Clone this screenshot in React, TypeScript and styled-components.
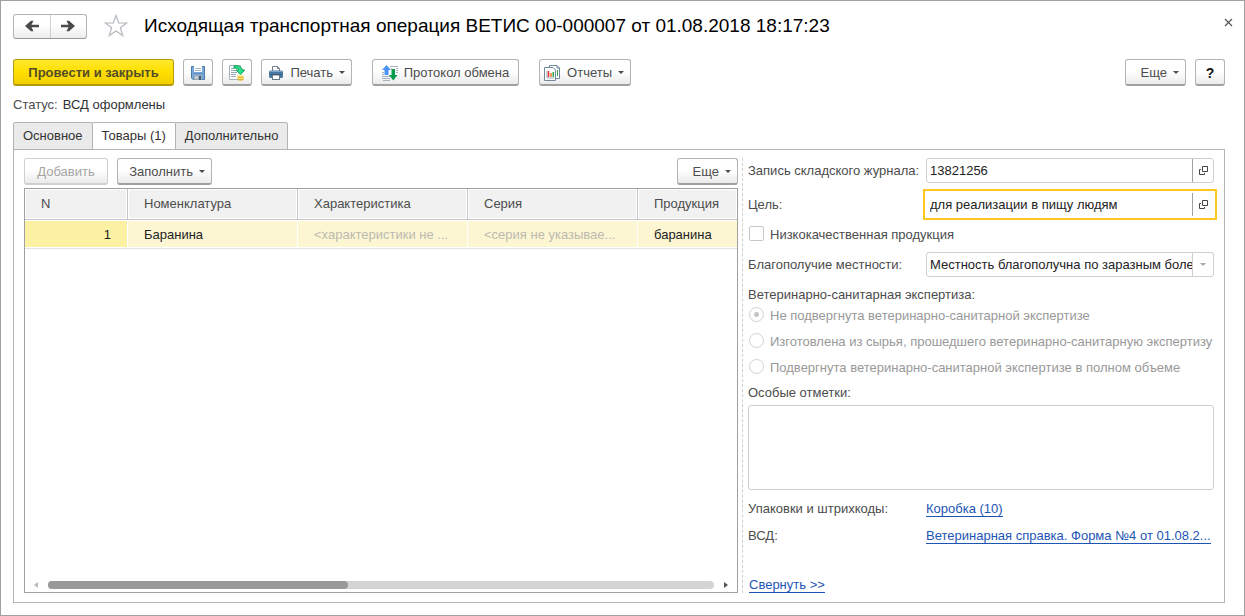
import React from 'react';
import styled, { createGlobalStyle } from 'styled-components';

const GlobalStyle = createGlobalStyle`
  *, *::before, *::after { box-sizing: border-box; }
  body { margin: 0; background: #fff; }
  body, button, input, select, textarea {
    font-family: "Liberation Sans", Arial, sans-serif;
    font-size: 13px;
    line-height: 16px;
    color: #4c4c4c;
  }
`;

const Window = styled.main`
  display: flex;
  flex-direction: column;
  min-height: 100vh;
  padding: 12px 19px 12px 12px;
  border: 1px solid #a0a0a0;
`;

const TitleBar = styled.header`
  display: flex;
  align-items: center;
  height: 26px;
`;

const Title = styled.h1`
  flex: 1;
  margin: 0;
  font-size: 19px;
  line-height: 26px;
  font-weight: 400;
  color: #000;
  white-space: nowrap;
`;

const NavGroup = styled.div`
  display: flex;
  width: 74px;
  height: 25px;
  border: 1px solid #b4b4b4;
  border-bottom-color: #999;
  border-radius: 3px;
  background: linear-gradient(#fff 40%, #ededed);
`;

const NavButton = styled.button`
  flex: 1;
  display: flex;
  align-items: center;
  justify-content: center;
  padding: 0;
  border: 0;
  background: none;
  & + & { border-left: 1px solid #d0d0d0; }
`;

const IconButton = styled.button`
  display: flex;
  padding: 0;
  border: 0;
  background: none;
`;

const StarButton = styled(IconButton)`
  margin: 0 16px 0 17px;
`;

const CloseButton = styled(IconButton)`
  margin: 0 -8px 8px 0;
`;

const Toolbar = styled.div`
  display: flex;
  align-items: center;
  gap: 9px;
  margin-top: 20px;
`;

const Spacer = styled.div<{ $size?: number }>`
  flex: ${p => (p.$size ? `0 0 ${p.$size}px` : '1')};
`;

const Button = styled.button<{ $width: number }>`
  display: flex;
  align-items: center;
  justify-content: center;
  gap: 6px;
  width: ${p => p.$width}px;
  height: 27px;
  padding: 1px 0 0;
  border: 1px solid #b4b4b4;
  border-bottom: 2px solid #a0a0a0;
  border-radius: 3px;
  background: linear-gradient(#fff 45%, #ebebeb);
  white-space: nowrap;
  &:disabled {
    color: #a5a5a5;
    border-color: #d0d0d0;
  }
`;

const MenuButton = styled(Button)`
  justify-content: flex-end;
  padding-right: 6px;
`;

const PrimaryButton = styled(Button)`
  border: 1px solid #b39b0c;
  border-bottom-width: 2px;
  background: linear-gradient(#ffe92e, #ffdf00 50%, #f2cf00);
  font-weight: 700;
  color: #534d29;
`;

const HelpButton = styled(Button)`
  font-weight: 700;
  font-size: 14px;
  color: #111;
`;

const Caret = styled.span<{ $muted?: boolean }>`
  border: 3px solid transparent;
  border-top-color: ${p => (p.$muted ? '#a8a8a8' : '#4c4c4c')};
  border-bottom: 0;
`;

const Status = styled.p`
  display: flex;
  gap: 5px;
  margin: 11px 0 9px;
  strong { font-weight: 400; color: #333; }
`;

const Tabs = styled.div`
  display: flex;
  margin-bottom: -1px;
`;

const Tab = styled.button<{ $active?: boolean }>`
  height: 28px;
  margin-right: -1px;
  padding: 0 9px;
  border: 1px solid #b4b4b4;
  border-bottom-color: ${p => (p.$active ? '#fff' : '#b4b4b4')};
  border-radius: 2px 2px 0 0;
  background: ${p => (p.$active ? '#fff' : '#eaeaea')};
  color: #333;
`;

const Panel = styled.section`
  flex: 1;
  display: flex;
  padding: 8px 10px 9px;
  border: 1px solid #b4b4b4;
`;

const Goods = styled.div`
  flex: 1;
  min-width: 0;
  display: flex;
  flex-direction: column;
`;

const GoodsToolbar = styled.div`
  display: flex;
  gap: 9px;
  margin-bottom: 3px;
`;

const GridFrame = styled.div`
  flex: 1;
  display: flex;
  flex-direction: column;
  justify-content: space-between;
  border: 1px solid #a0a0a0;
`;

const Grid = styled.table`
  width: 100%;
  table-layout: fixed;
  border-collapse: separate;
  border-spacing: 0;
`;

const Column = styled.col<{ $width?: number }>`
  width: ${p => (p.$width ? `${p.$width}px` : 'auto')};
`;

const HeadCell = styled.th`
  height: 31px;
  padding: 0 16px;
  border-right: 1px solid #c6c6c6;
  border-bottom: 1px solid #c6c6c6;
  background: #f1f1f1;
  box-shadow: inset 1px 1px #fff, inset -1px -1px #fff;
  font-weight: 400;
  text-align: left;
  &:last-child { border-right: 0; }
`;

const Cell = styled.td<{ $current?: boolean; $muted?: boolean }>`
  height: 29px;
  padding: 1px 16px 0;
  border-right: 1px solid #fff;
  border-bottom: 1px solid #e2e2e2;
  background: ${p => (p.$current ? '#fcf0a3' : '#fcf6d2')};
  box-shadow: inset 0 1px #fff, inset 0 -1px #fff;
  color: ${p => (p.$muted ? '#bcbab0' : '#222')};
  text-align: ${p => (p.$current ? 'right' : 'left')};
  white-space: nowrap;
  &:last-child { border-right: 0; }
`;

const ScrollBar = styled.div`
  display: flex;
  align-items: center;
  gap: 10px;
  padding: 0 9px 3px;
`;

const ScrollTrack = styled.div`
  flex: 1;
  height: 8px;
  border-radius: 4px;
  background: #d4d4d4;
`;

const ScrollThumb = styled.div`
  width: 45%;
  height: 8px;
  border-radius: 4px;
  background: #999;
`;

const ScrollArrow = styled.span<{ $left?: boolean }>`
  border: 3px solid transparent;
  border-${p => (p.$left ? 'right' : 'left')}: 4px solid ${p => (p.$left ? '#bcbcbc' : '#555')};
  border-${p => (p.$left ? 'left' : 'right')}: 0;
`;

const Details = styled.aside`
  flex: 0 0 472px;
  display: flex;
  flex-direction: column;
  margin-left: 4px;
  padding-left: 5px;
  border-left: 1px dashed #cfcfcf;
`;

const Row = styled.div<{ $gap?: number }>`
  display: grid;
  grid-template-columns: 178px minmax(0, 1fr);
  align-items: center;
  margin-bottom: ${p => p.$gap ?? 9}px;
`;

const Field = styled.div<{ $focused?: boolean }>`
  display: flex;
  height: 25px;
  border: 1px solid ${p => (p.$focused ? '#fff' : '#cfcfcf')};
  border-radius: ${p => (p.$focused ? 0 : 3)}px;
  outline: ${p => (p.$focused ? '2px solid #fcc81f' : 'none')};
  outline-offset: 1px;
`;

const TextInput = styled.input`
  flex: 1;
  min-width: 0;
  padding: 0 3px;
  border: 0;
  outline: 0;
  background: none;
  color: #222;
`;

const OpenButton = styled.button`
  display: flex;
  align-items: center;
  justify-content: center;
  width: 21px;
  padding: 0;
  border: 0;
  border-left: 1px solid #a0a0a0;
  background: none;
`;

const Select = styled.select`
  appearance: none;
  flex: 1;
  min-width: 0;
  padding: 0 0 0 3px;
  border: 0;
  outline: 0;
  background: none;
  color: #222;
`;

const SelectArrow = styled.span`
  display: flex;
  align-items: center;
  justify-content: center;
  width: 21px;
  border-left: 1px solid #cfcfcf;
  pointer-events: none;
`;

const Choice = styled.label<{ $muted?: boolean }>`
  display: flex;
  align-items: flex-start;
  gap: 6px;
  height: 17px;
  margin-bottom: 9px;
  line-height: 18px;
  color: ${p => (p.$muted ? '#999' : '#4c4c4c')};
  white-space: nowrap;
`;

const Checkbox = styled.input`
  appearance: none;
  width: 15px;
  height: 15px;
  margin: 0 0 0 1px;
  border: 1px solid #c8c8c8;
  border-radius: 2px;
`;

const Radio = styled(Checkbox)`
  border-color: #d2d2d2;
  border-radius: 50%;
  &:checked { background: radial-gradient(circle, #c4c4c4 2px, #fff 3px); }
`;

const RadioSet = styled.fieldset`
  margin: 0;
  padding: 1px 0 0;
  border: 0;
`;

const Legend = styled.legend`
  padding: 1px 0 3px;
`;

const NotesLabel = styled.label`
  margin-bottom: 4px;
`;

const Notes = styled.textarea`
  height: 85px;
  margin: 0 0 11px;
  border: 1px solid #cfcfcf;
  border-radius: 3px;
  resize: none;
`;

const Link = styled.a`
  justify-self: start;
  color: #1d55b5;
  text-decoration: none;
  border-bottom: 1px solid #1d55b5;
  line-height: 15px;
  white-space: nowrap;
`;

const CollapseLink = styled(Link)`
  align-self: flex-start;
  margin: auto 0 0 1px;
`;

const ArrowIcon = ({ right }: { right?: boolean }) => (
  <svg width="16" height="12" viewBox="0 0 16 12" aria-hidden="true">
    <path
      d={right ? 'M1 4.700H8.500L6.500 .800H9L15 6 9 11.200H6.500L8.500 7.300H1Z' : 'M15 4.700H7.500L9.500 .800H7L1 6 7 11.200H9.500L7.500 7.300H15Z'}
      fill="#4a4a4a"
    />
  </svg>
);

const StarIcon = () => (
  <svg width="24" height="24" viewBox="0 0 24 24" aria-hidden="true">
    <path d="M12 1.5 14.7 9H22.6L16.4 13.7 18.7 21.5 12 16.9 5.3 21.5 7.6 13.7 1.4 9H9.3Z" fill="#fff" stroke="#b4bac0" strokeWidth="1.2" />
  </svg>
);

const CloseIcon = () => (
  <svg width="9" height="9" viewBox="0 0 9 9" aria-hidden="true">
    <path d="M1 1 8 8M8 1 1 8" stroke="#555" strokeWidth="1.2" />
  </svg>
);

const SaveIcon = () => (
  <svg width="16" height="16" viewBox="0 0 16 16" aria-hidden="true">
    <path d="M1.5 1.5H14.5V14.5H3L1.5 13Z" fill="#78a8da" stroke="#4d7ba8" />
    <rect x="4" y="1" width="8" height="6" fill="#fff" />
    <path d="M5 3.500h6M5 5.500h6" stroke="#a9bac9" />
    <path d="M3 8.500h10" stroke="#5c8ec2" />
    <rect x="4" y="10" width="8" height="5" fill="#9ba8b2" />
    <rect x="5" y="11" width="3" height="3" fill="#c3ccd2" />
    <rect x="9" y="11" width="2" height="4" fill="#3c5f7e" />
  </svg>
);

const PostIcon = () => (
  <svg width="16" height="16" viewBox="0 0 16 16" aria-hidden="true">
    <path d="M.5.5h11v14H.5Z" fill="#fff" stroke="#a5b2be" />
    <path d="M2 3.500h3M2 5.500h5M2 7.500h6M2 9.500h5M2 11.500h5" stroke="#9aa9b8" />
    <path d="M5 .700C10 .300 13 2 13.200 5H15.700L11.500 9.700 7 5H9.800C9.400 3.600 8 3 5 3.200Z" fill="#2ce08c" stroke="#079a55" strokeWidth=".9" />
    <path d="M8.500 10.500v4c0 1.600 6 1.600 6 0v-4Z" fill="#dfb52d" />
    <ellipse cx="11.500" cy="10.700" rx="3" ry="1" fill="#fff09a" />
    <path d="M8.500 12.500c0 1.300 6 1.300 6 0" fill="none" stroke="#fff09a" />
  </svg>
);

const PrintIcon = () => (
  <svg width="16" height="16" viewBox="0 0 16 16" aria-hidden="true">
    <path d="M4.500 6V1.500H9.500L11.500 3.500V6" fill="#fff" stroke="#74828f" />
    <path d="M9.500 1.500V3.500h2" fill="none" stroke="#74828f" />
    <rect x="1" y="5.500" width="14" height="7.500" rx="1.500" fill="#4878a4" />
    <path d="M2 6.500h12" stroke="#7fa5c9" />
    <path d="M3 9.500h10" stroke="#24435f" />
    <rect x="4.500" y="10" width="7" height="4.500" fill="#fff" stroke="#65798b" />
  </svg>
);

const ExchangeIcon = () => (
  <svg width="16" height="16" viewBox="0 0 16 16" aria-hidden="true">
    <path d="M8 1.500h8M9 3.500h1M14 3.500h2M14 5.500h2M14 7.500h2M0 7.500h2M0 9.500h2M0 11.500h8M0 13.500h8M1 15.500h7" stroke="#a6b2bc" />
    <path d="M4.500 0 9 5H6.500V10H2.500V5H0Z" fill="#4c93f7" />
    <path d="M9.500 4h3.500v6h2.500L11.300 15.500 7 10h2.500Z" fill="#079b4c" />
  </svg>
);

const ReportIcon = () => (
  <svg width="17" height="16" viewBox="0 0 17 16" aria-hidden="true">
    <path d="M5.500 3V.5H13L15.500 3V13.500H12" fill="#fff" stroke="#74899b" />
    <path d="M13 .5V3h2.500" fill="none" stroke="#74899b" />
    <path d="M.5 2.500H9L11.500 5V15.500H.5Z" fill="#fff" stroke="#74899b" />
    <path d="M3 6v7h7" fill="none" stroke="#9fb0bd" />
    <path d="M4.500 6v6" stroke="#e23c3c" strokeWidth="1.600" />
    <path d="M7 8v4" stroke="#ef7b30" strokeWidth="1.600" />
    <path d="M9.300 7v5" stroke="#2fa750" strokeWidth="1.600" />
    <path d="M13.500 5v6" stroke="#35a454" />
  </svg>
);

const OpenIcon = () => (
  <svg width="9" height="9" viewBox="0 0 9 9" aria-hidden="true">
    <path d="M3.500.5h5v5h-5ZM2 3.500H.5v5h5V7" fill="none" stroke="#444" />
  </svg>
);

const exams = [
  'Не подвергнута ветеринарно-санитарной экспертизе',
  'Изготовлена из сырья, прошедшего ветеринарно-санитарную экспертизу',
  'Подвергнута ветеринарно-санитарной экспертизе в полном объеме',
];

export default function App() {
  return (
    <>
      <GlobalStyle />
      <Window>
        <TitleBar>
          <NavGroup>
            <NavButton aria-label="Назад"><ArrowIcon /></NavButton>
            <NavButton aria-label="Вперед"><ArrowIcon right /></NavButton>
          </NavGroup>
          <StarButton aria-label="Избранное"><StarIcon /></StarButton>
          <Title>Исходящая транспортная операция ВЕТИС 00-000007 от 01.08.2018 18:17:23</Title>
          <CloseButton aria-label="Закрыть"><CloseIcon /></CloseButton>
        </TitleBar>

        <Toolbar>
          <PrimaryButton $width={161}>Провести и закрыть</PrimaryButton>
          <Button $width={30} aria-label="Записать"><SaveIcon /></Button>
          <Button $width={30} aria-label="Провести"><PostIcon /></Button>
          <MenuButton $width={91}><PrintIcon />Печать<Caret /></MenuButton>
          <Spacer $size={2} />
          <Button $width={147}><ExchangeIcon />Протокол обмена</Button>
          <Spacer $size={2} />
          <MenuButton $width={92}><ReportIcon />Отчеты<Caret /></MenuButton>
          <Spacer />
          <MenuButton $width={61}>Еще<Caret /></MenuButton>
          <HelpButton $width={30}>?</HelpButton>
        </Toolbar>

        <Status><span>Статус:</span><strong>ВСД оформлены</strong></Status>

        <Tabs role="tablist">
          <Tab role="tab">Основное</Tab>
          <Tab role="tab" aria-selected $active>Товары (1)</Tab>
          <Tab role="tab">Дополнительно</Tab>
        </Tabs>

        <Panel>
          <Goods>
            <GoodsToolbar>
              <Button $width={84} disabled>Добавить</Button>
              <MenuButton $width={95}>Заполнить<Caret /></MenuButton>
              <Spacer />
              <MenuButton $width={61}>Еще<Caret /></MenuButton>
            </GoodsToolbar>
            <GridFrame>
              <Grid>
                <colgroup>
                  <Column $width={103} />
                  <Column $width={170} />
                  <Column $width={170} />
                  <Column $width={170} />
                  <Column />
                </colgroup>
                <thead>
                  <tr>
                    <HeadCell>N</HeadCell>
                    <HeadCell>Номенклатура</HeadCell>
                    <HeadCell>Характеристика</HeadCell>
                    <HeadCell>Серия</HeadCell>
                    <HeadCell>Продукция</HeadCell>
                  </tr>
                </thead>
                <tbody>
                  <tr>
                    <Cell $current>1</Cell>
                    <Cell>Баранина</Cell>
                    <Cell $muted>&lt;характеристики не ...</Cell>
                    <Cell $muted>&lt;серия не указывае...</Cell>
                    <Cell>баранина</Cell>
                  </tr>
                </tbody>
              </Grid>
              <ScrollBar>
                <ScrollArrow $left />
                <ScrollTrack><ScrollThumb /></ScrollTrack>
                <ScrollArrow />
              </ScrollBar>
            </GridFrame>
          </Goods>

          <Details>
            <Row>
              <label htmlFor="journal">Запись складского журнала:</label>
              <Field>
                <TextInput id="journal" defaultValue="13821256" />
                <OpenButton aria-label="Открыть запись"><OpenIcon /></OpenButton>
              </Field>
            </Row>
            <Row>
              <label htmlFor="purpose">Цель:</label>
              <Field $focused>
                <TextInput id="purpose" defaultValue="для реализации в пищу людям" />
                <OpenButton aria-label="Открыть цель"><OpenIcon /></OpenButton>
              </Field>
            </Row>
            <Choice><Checkbox type="checkbox" />Низкокачественная продукция</Choice>
            <Row>
              <label htmlFor="area">Благополучие местности:</label>
              <Field>
                <Select id="area"><option>Местность благополучна по заразным боле</option></Select>
                <SelectArrow><Caret $muted /></SelectArrow>
              </Field>
            </Row>
            <RadioSet disabled>
              <Legend>Ветеринарно-санитарная экспертиза:</Legend>
              {exams.map((exam, i) => (
                <Choice key={exam} $muted>
                  <Radio type="radio" name="exam" defaultChecked={i === 0} />{exam}
                </Choice>
              ))}
            </RadioSet>
            <NotesLabel htmlFor="notes">Особые отметки:</NotesLabel>
            <Notes id="notes" />
            <Row $gap={11}>
              <span>Упаковки и штрихкоды:</span>
              <Link href="#packages">Коробка (10)</Link>
            </Row>
            <Row>
              <span>ВСД:</span>
              <Link href="#vsd">Ветеринарная справка. Форма №4 от 01.08.2...</Link>
            </Row>
            <CollapseLink href="#collapse">Свернуть &gt;&gt;</CollapseLink>
          </Details>
        </Panel>
      </Window>
    </>
  );
}
